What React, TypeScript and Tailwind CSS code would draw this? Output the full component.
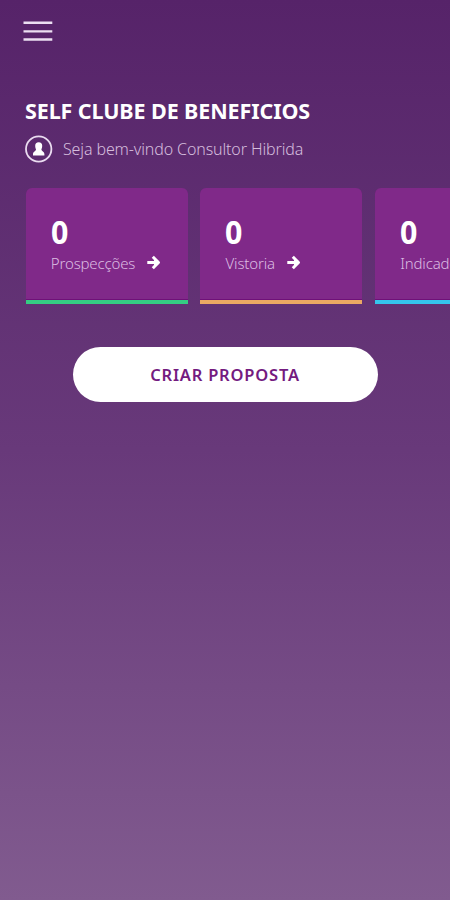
type CardData = {
  label: string;
  value: number;
  border: string;
};

const cards: CardData[] = [
  { label: "Prospecções", value: 0, border: "border-[#35cc83]" },
  { label: "Vistoria", value: 0, border: "border-[#eba863]" },
  { label: "Indicados", value: 0, border: "border-[#35c5ed]" },
];

function MenuIcon() {
  return (
    <svg width="30" height="22" viewBox="0 0 30 22" stroke="#ecdff2" strokeWidth="2.4">
      <path d="M0.5 2.7H29.3M0.5 11.4H29.3M0.5 19.5H29.3" />
    </svg>
  );
}

function UserIcon() {
  return (
    <svg width="28" height="28" viewBox="0 0 28 28" fill="none">
      <circle cx="13.7" cy="14" r="12.7" stroke="#eadcf0" strokeWidth="1.8" />
      <path
        d="M13.7 7.3C11.4 7.3 10.2 8.7 10.2 10.8C10.2 12.4 10.7 13.6 11 14.6C11 16.2 8 16.6 8 19.2V20.4H19.4V19.2C19.4 16.6 16.4 16.2 16.4 14.6C16.7 13.6 17.2 12.4 17.2 10.8C17.2 8.7 16 7.3 13.7 7.3Z"
        fill="white"
      />
    </svg>
  );
}

function ArrowIcon() {
  return (
    <svg width="14" height="16" viewBox="0 0 14 16" fill="none" stroke="white" strokeWidth="3" strokeLinejoin="round">
      <path d="M0.3 7.5H10M5.8 1.8L11.5 7.5L5.8 13.2" />
      <path d="M7.5 4.5L10.5 7.5L7.5 10.5Z" fill="white" strokeWidth="1" />
    </svg>
  );
}

function Card({ card }: { card: CardData }) {
  return (
    <div className={`h-[116px] w-[162px] shrink-0 rounded-t-md border-b-4 bg-[#802989] pl-[25px] pt-[26px] shadow-[inset_0_-1px_0_#6f1178] ${card.border}`}>
      <p className="h-[37px] origin-left scale-x-92 text-[33px] font-bold leading-[35px]">{card.value}</p>
      <div className="flex h-[24px] items-center gap-[12px]">
        <span className="text-[15px] font-light leading-[24px] tracking-[-0.15px] text-[#dbbce2]">{card.label}</span>
        <ArrowIcon />
      </div>
    </div>
  );
}

export default function App() {
  return (
    <div className="h-[900px] w-full overflow-hidden bg-linear-to-b from-[#562369] via-[#68397a] via-50% to-[#815b8f] font-['Noto_Sans',sans-serif] text-white">
      <header className="pl-[23px] pt-5">
        <button className="block" aria-label="Menu">
          <MenuIcon />
        </button>
      </header>

      <section className="pl-[25px] pt-[54px]">
        <h1 className="h-[30px] whitespace-nowrap text-[21.5px] font-bold leading-[30px] tracking-[-0.1px]">SELF CLUBE DE BENEFICIOS</h1>
        <div className="mt-[9px] flex h-[28px] items-center gap-[10px]">
          <UserIcon />
          <p className="whitespace-nowrap text-[16px] font-light leading-[24px] tracking-[-0.12px] text-[#d5bddd]">
            Seja bem-vindo Consultor Hibrida
          </p>
        </div>
      </section>

      <div className="mt-[25px] flex gap-[12.7px] overflow-hidden pl-[25.8px]">
        {cards.map((card) => (
          <Card key={card.label} card={card} />
        ))}
      </div>

      <div className="flex justify-center pt-[43px]">
        <button className="h-[55px] w-[305px] rounded-full bg-white pt-0.5 text-[16.5px] font-semibold tracking-[0.8px] text-[#741b80]">
          CRIAR PROPOSTA
        </button>
      </div>
    </div>
  );
}
